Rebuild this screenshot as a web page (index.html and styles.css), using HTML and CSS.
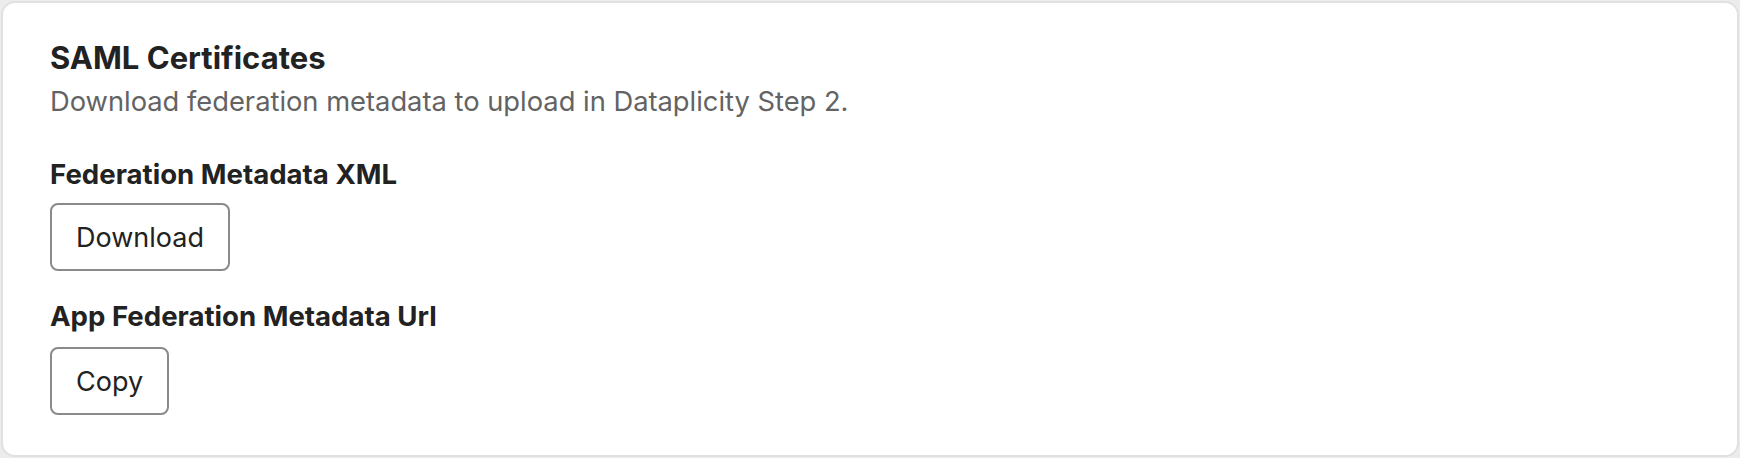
FILE: index.html
```html
<!DOCTYPE html>
<html lang="en">
<head>
<meta charset="utf-8">
<title>SAML Certificates</title>
<link rel="stylesheet" href="styles.css">
</head>
<body>
<section class="card">
  <header class="card-head">
    <h2 class="card-title">SAML Certificates</h2>
    <p class="card-desc">Download federation metadata to upload in Dataplicity Step 2.</p>
  </header>
  <div class="field">
    <div class="field-label">Federation Metadata XML</div>
    <div><button class="btn" type="button">Download</button></div>
  </div>
  <div class="field">
    <div class="field-label">App Federation Metadata Url</div>
    <div><button class="btn" type="button">Copy</button></div>
  </div>
</section>
</body>
</html>
```

FILE: styles.css
```css
* { box-sizing: border-box; }
html, body { margin: 0; padding: 0; }
body {
  background: #ececec;
  padding: 1px;
  font-family: Inter, "Noto Sans", "Liberation Sans", sans-serif;
  color: #222222;
  height: 458px;
}
.card {
  background: #ffffff;
  border: 2px solid #e1e1e1;
  border-radius: 14px;
  height: 456px;
  padding: 37px 46px 0 47px;
  display: flex;
  flex-direction: column;
}
.card-head {
  display: flex;
  flex-direction: column;
  gap: 9px;
}
.card-title {
  margin: 0;
  font-size: 31px;
  line-height: 36px;
  font-weight: 700;
  color: #222222;
}
.card-desc {
  margin: 0;
  font-size: 27.3px;
  line-height: 34px;
  color: #636363;
}
.field {
  display: flex;
  flex-direction: column;
  gap: 12px;
  margin-top: 38px;
}
.field + .field {
  margin-top: 28px;
  gap: 13.5px;
}
.field-label {
  font-size: 27.6px;
  line-height: 34px;
  font-weight: 700;
  color: #222222;
}
.btn {
  font-family: inherit;
  font-size: 27px;
  line-height: 36px;
  color: #222222;
  background: #ffffff;
  border: 2px solid #8a8a8a;
  border-radius: 8px;
  padding: 15px 24px 13px;
  height: 68px;
  cursor: pointer;
}
```
